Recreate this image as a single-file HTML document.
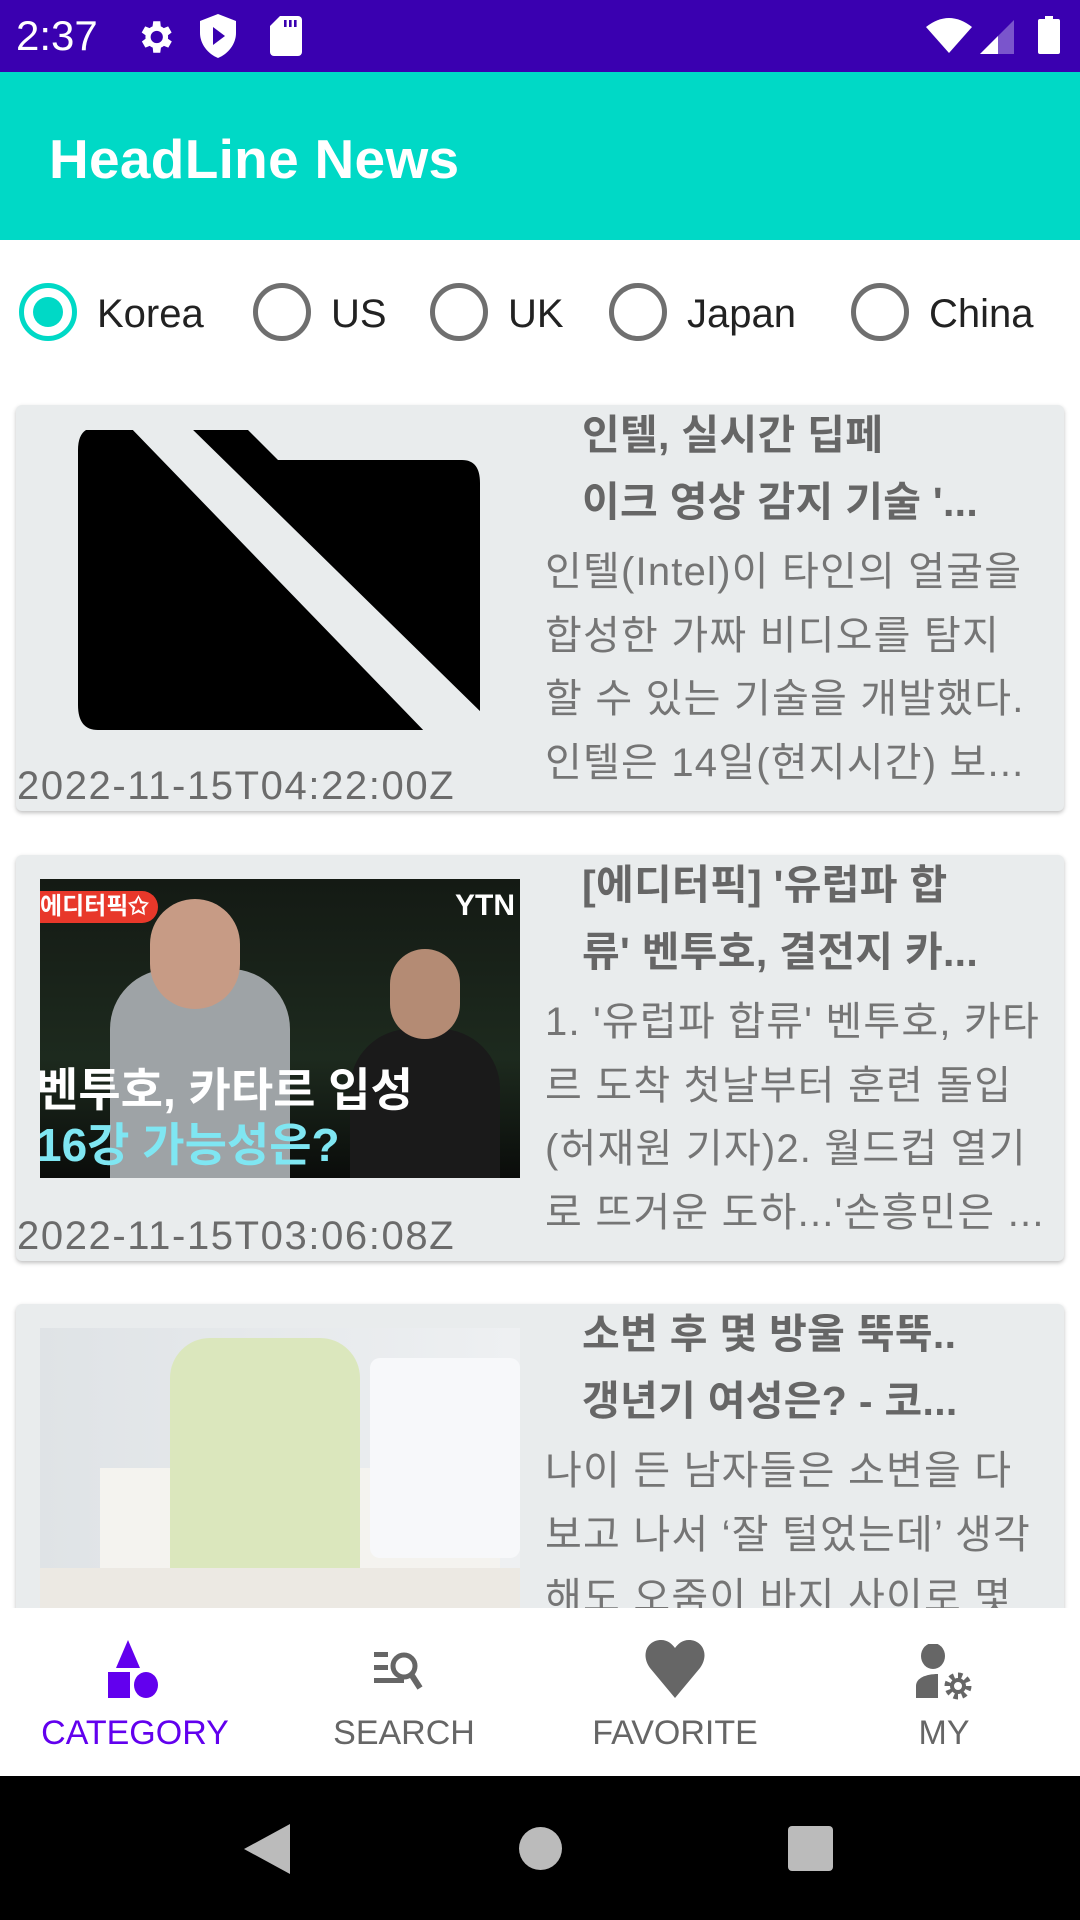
<!DOCTYPE html>
<html><head><meta charset="utf-8"><style>
*{margin:0;padding:0;box-sizing:border-box}
body{width:1080px;height:1920px;position:relative;overflow:hidden;background:#fff;font-family:"Liberation Sans","Noto Sans CJK KR",sans-serif}
.abs{position:absolute}
.sb{left:0;top:0;width:1080px;height:72px;background:#3A00B0}
.ab{left:0;top:72px;width:1080px;height:168px;background:#00D9C6}
.rad{width:58px;height:58px;border-radius:50%;border:5px solid #6f6f6f;top:283px}
.rl{top:288px;font-size:40px;color:#222;line-height:52px}
.card{left:16px;width:1048px;height:406px;background:#E9ECED;border-radius:6px;box-shadow:0 2px 4px rgba(0,0,0,.25)}
.t{position:absolute;left:566px;font-size:41px;font-weight:bold;color:#666;white-space:nowrap;line-height:50px;letter-spacing:0.3px}
.d{position:absolute;left:529px;font-size:40px;color:#757575;white-space:nowrap;line-height:50px;letter-spacing:1.2px}
.dt{position:absolute;left:1px;top:356px;font-size:40px;color:#6b6b6b;white-space:nowrap;line-height:50px;letter-spacing:1.6px}
.img{position:absolute;left:24px;top:24px;width:480px;height:299px;overflow:hidden}
.nl{top:1711px;font-size:34px;color:#666;width:270px;text-align:center;line-height:44px}
</style></head><body>
<div class="abs sb"></div>
<div class="abs" style="left:16px;top:12px;font-size:42px;color:#fff;line-height:48px">2:37</div>
<svg class="abs" style="left:134px;top:16px" width="42" height="42" viewBox="0 0 24 24"><path fill="#fff" d="M19.4 13a7.5 7.5 0 000-2l2.1-1.6-2-3.5-2.5 1a7 7 0 00-1.7-1L15 3h-4l-.4 2.9a7 7 0 00-1.7 1l-2.5-1-2 3.5L6.6 11a7.5 7.5 0 000 2l-2.1 1.6 2 3.5 2.5-1a7 7 0 001.7 1L11 21h4l.4-2.9a7 7 0 001.7-1l2.5 1 2-3.5zM13 15.5a3.5 3.5 0 110-7 3.5 3.5 0 010 7z"/></svg>
<svg class="abs" style="left:200px;top:14px" width="36" height="44" viewBox="0 0 18 22"><path fill="#fff" d="M9 0L0 3.5v6C0 15 4 20 9 22c5-2 9-7 9-12.5v-6z"/><path fill="#3A00B0" d="M6.5 6.5v9l6-4.5z"/></svg>
<svg class="abs" style="left:270px;top:16px" width="32" height="40" viewBox="0 0 16 20"><path fill="#fff" d="M5 0h9a2 2 0 012 2v16a2 2 0 01-2 2H2a2 2 0 01-2-2V5z"/><path fill="#3A00B0" d="M7 2h1.3v3.5H7zM9.5 2h1.3v3.5H9.5zM12 2h1.3v3.5H12z"/></svg>
<svg class="abs" style="left:926px;top:17px" width="46" height="36" viewBox="0 0 46 36"><path fill="#fff" d="M0 10Q23-8 46 10L23 36z"/></svg>
<svg class="abs" style="left:980px;top:20px" width="34" height="34" viewBox="0 0 34 34"><path fill="#7a55cc" d="M34 0v34H0z"/><path fill="#fff" d="M18 16v18H0z"/></svg>
<svg class="abs" style="left:1038px;top:16px" width="22" height="38" viewBox="0 0 22 38"><path fill="#fff" d="M7 0h8v3h5a2 2 0 012 2v31a2 2 0 01-2 2H2a2 2 0 01-2-2V5a2 2 0 012-2h5z"/></svg>
<div class="abs ab"></div>
<div class="abs" style="left:49px;top:126px;font-size:55px;font-weight:bold;color:#fff;line-height:66px;letter-spacing:0.3px">HeadLine News</div>

<div class="abs rad" style="left:19px;border-color:#00D9C6"></div>
<div class="abs" style="left:33px;top:297px;width:30px;height:30px;border-radius:50%;background:#00D9C6"></div>
<div class="abs rl" style="left:97px">Korea</div>
<div class="abs rad" style="left:253px"></div><div class="abs rl" style="left:331px">US</div>
<div class="abs rad" style="left:430px"></div><div class="abs rl" style="left:508px">UK</div>
<div class="abs rad" style="left:609px"></div><div class="abs rl" style="left:687px">Japan</div>
<div class="abs rad" style="left:851px"></div><div class="abs rl" style="left:929px">China</div>

<div class="abs card" style="top:405px">
<svg class="abs" style="left:0;top:0" width="520" height="340"><path fill="#000" d="M70 25H232L262 55H446Q464 55 464 78V312L410 325H82Q62 325 62 300V45Q62 30 70 25z"/><path fill="#E9ECED" d="M112 20H172L470 312V330H412z"/></svg>
<div class="t" style="top:5px">인텔, 실시간 딥페</div>
<div class="t" style="top:72px">이크 영상 감지 기술 '...</div>
<div class="d" style="top:142px">인텔(Intel)이 타인의 얼굴을</div>
<div class="d" style="top:206px">합성한 가짜 비디오를 탐지</div>
<div class="d" style="top:269px">할 수 있는 기술을 개발했다.</div>
<div class="d" style="top:333px">인텔은 14일(현지시간) 보...</div>
<div class="dt">2022-11-15T04:22:00Z</div>
</div>

<div class="abs card" style="top:855px">
<div class="img" style="background:linear-gradient(180deg,#141a14,#1d2a1e 60%,#0a0c0a)">
<div class="abs" style="left:70px;top:90px;width:180px;height:210px;background:#9ea3a6;border-radius:60px 60px 0 0"></div>
<div class="abs" style="left:110px;top:20px;width:90px;height:110px;background:#c79b85;border-radius:45px"></div>
<div class="abs" style="left:310px;top:150px;width:150px;height:150px;background:#1a1a1a;border-radius:60px 60px 0 0"></div>
<div class="abs" style="left:350px;top:70px;width:70px;height:90px;background:#b48b74;border-radius:35px"></div>
<div class="abs" style="left:0;top:12px;width:118px;height:32px;background:#e8382a;border-radius:0 16px 16px 0;color:#fff;font-size:24px;font-weight:bold;line-height:32px">에디터픽✩</div>
<div class="abs" style="left:415px;top:10px;color:#fff;font-size:30px;font-weight:bold">YTN</div>
<div class="abs" style="left:-4px;top:185px;color:#fff;font-size:46px;font-weight:bold;line-height:52px;white-space:nowrap">벤투호, 카타르 입성</div>
<div class="abs" style="left:-4px;top:240px;color:#7fe6f2;font-size:46px;font-weight:bold;line-height:52px;white-space:nowrap">16강 가능성은?</div>
</div>
<div class="t" style="top:5px">[에디터픽] '유럽파 합</div>
<div class="t" style="top:72px">류' 벤투호, 결전지 카...</div>
<div class="d" style="top:142px">1. '유럽파 합류' 벤투호, 카타</div>
<div class="d" style="top:206px">르 도착 첫날부터 훈련 돌입</div>
<div class="d" style="top:269px">(허재원 기자)2. 월드컵 열기</div>
<div class="d" style="top:333px">로 뜨거운 도하...'손흥민은 ...</div>
<div class="dt">2022-11-15T03:06:08Z</div>
</div>

<div class="abs card" style="top:1304px">
<div class="img" style="background:linear-gradient(90deg,#dfe3e6,#eef0f2)">
<div class="abs" style="left:60px;top:140px;width:400px;height:160px;background:#f4f3ef"></div>
<div class="abs" style="left:330px;top:30px;width:150px;height:200px;background:#f7f8fa;border-radius:10px"></div>
<div class="abs" style="left:130px;top:10px;width:190px;height:290px;background:#dbe7bd;border-radius:40px 40px 0 0"></div>
<div class="abs" style="left:0;top:240px;width:480px;height:60px;background:#ece9e3"></div>
</div>
<div class="t" style="top:5px">소변 후 몇 방울 뚝뚝..</div>
<div class="t" style="top:72px">갱년기 여성은? - 코...</div>
<div class="d" style="top:142px">나이 든 남자들은 소변을 다</div>
<div class="d" style="top:206px">보고 나서 ‘잘 털었는데’ 생각</div>
<div class="d" style="top:269px">해도 오줌이 바지 사이로 몇</div>
</div>

<div class="abs" style="left:0;top:1608px;width:1080px;height:168px;background:#fff"></div>
<svg class="abs" style="left:106px;top:1638px" width="58" height="64" viewBox="0 0 58 64"><path fill="#6200EE" d="M22 2L34 30H10z"/><rect x="2" y="34" width="22" height="26" fill="#6200EE"/><ellipse cx="40" cy="47" rx="12" ry="13" fill="#6200EE"/></svg>
<svg class="abs" style="left:372px;top:1648px" width="66" height="50" viewBox="0 0 66 50"><path fill="#666" d="M2 4h14v5H2zM2 17h14v5H2zM2 30h30v5H2z"/><circle cx="32" cy="18" r="11" fill="none" stroke="#666" stroke-width="5"/><path d="M39 26l9 14" stroke="#666" stroke-width="6"/></svg>
<svg class="abs" style="left:644px;top:1640px" width="62" height="58" viewBox="0 0 62 58"><path fill="#666" d="M31 58L6 28C-4 14 4 0 17 0c7 0 11 4 14 8 3-4 7-8 14-8 13 0 21 14 11 28z"/></svg>
<svg class="abs" style="left:914px;top:1644px" width="62" height="56" viewBox="0 0 62 56"><ellipse cx="19" cy="12" rx="12" ry="13" fill="#666"/><path fill="#666" d="M2 54V42c0-8 10-12 22-12v24z"/><circle cx="44" cy="42" r="10" fill="none" stroke="#666" stroke-width="7" stroke-dasharray="4 3.8"/><circle cx="44" cy="42" r="6" fill="none" stroke="#666" stroke-width="4"/></svg>
<div class="abs nl" style="left:0;color:#6200EE">CATEGORY</div>
<div class="abs nl" style="left:269px">SEARCH</div>
<div class="abs nl" style="left:540px">FAVORITE</div>
<div class="abs nl" style="left:809px">MY</div>

<div class="abs" style="left:0;top:1776px;width:1080px;height:144px;background:#000"></div>
<svg class="abs" style="left:244px;top:1824px" width="46" height="50" viewBox="0 0 46 50"><path fill="#bbb" d="M46 0v50L0 25z"/></svg>
<div class="abs" style="left:519px;top:1827px;width:43px;height:43px;border-radius:50%;background:#bbb"></div>
<div class="abs" style="left:788px;top:1826px;width:45px;height:45px;border-radius:4px;background:#bbb"></div>
</body></html>
